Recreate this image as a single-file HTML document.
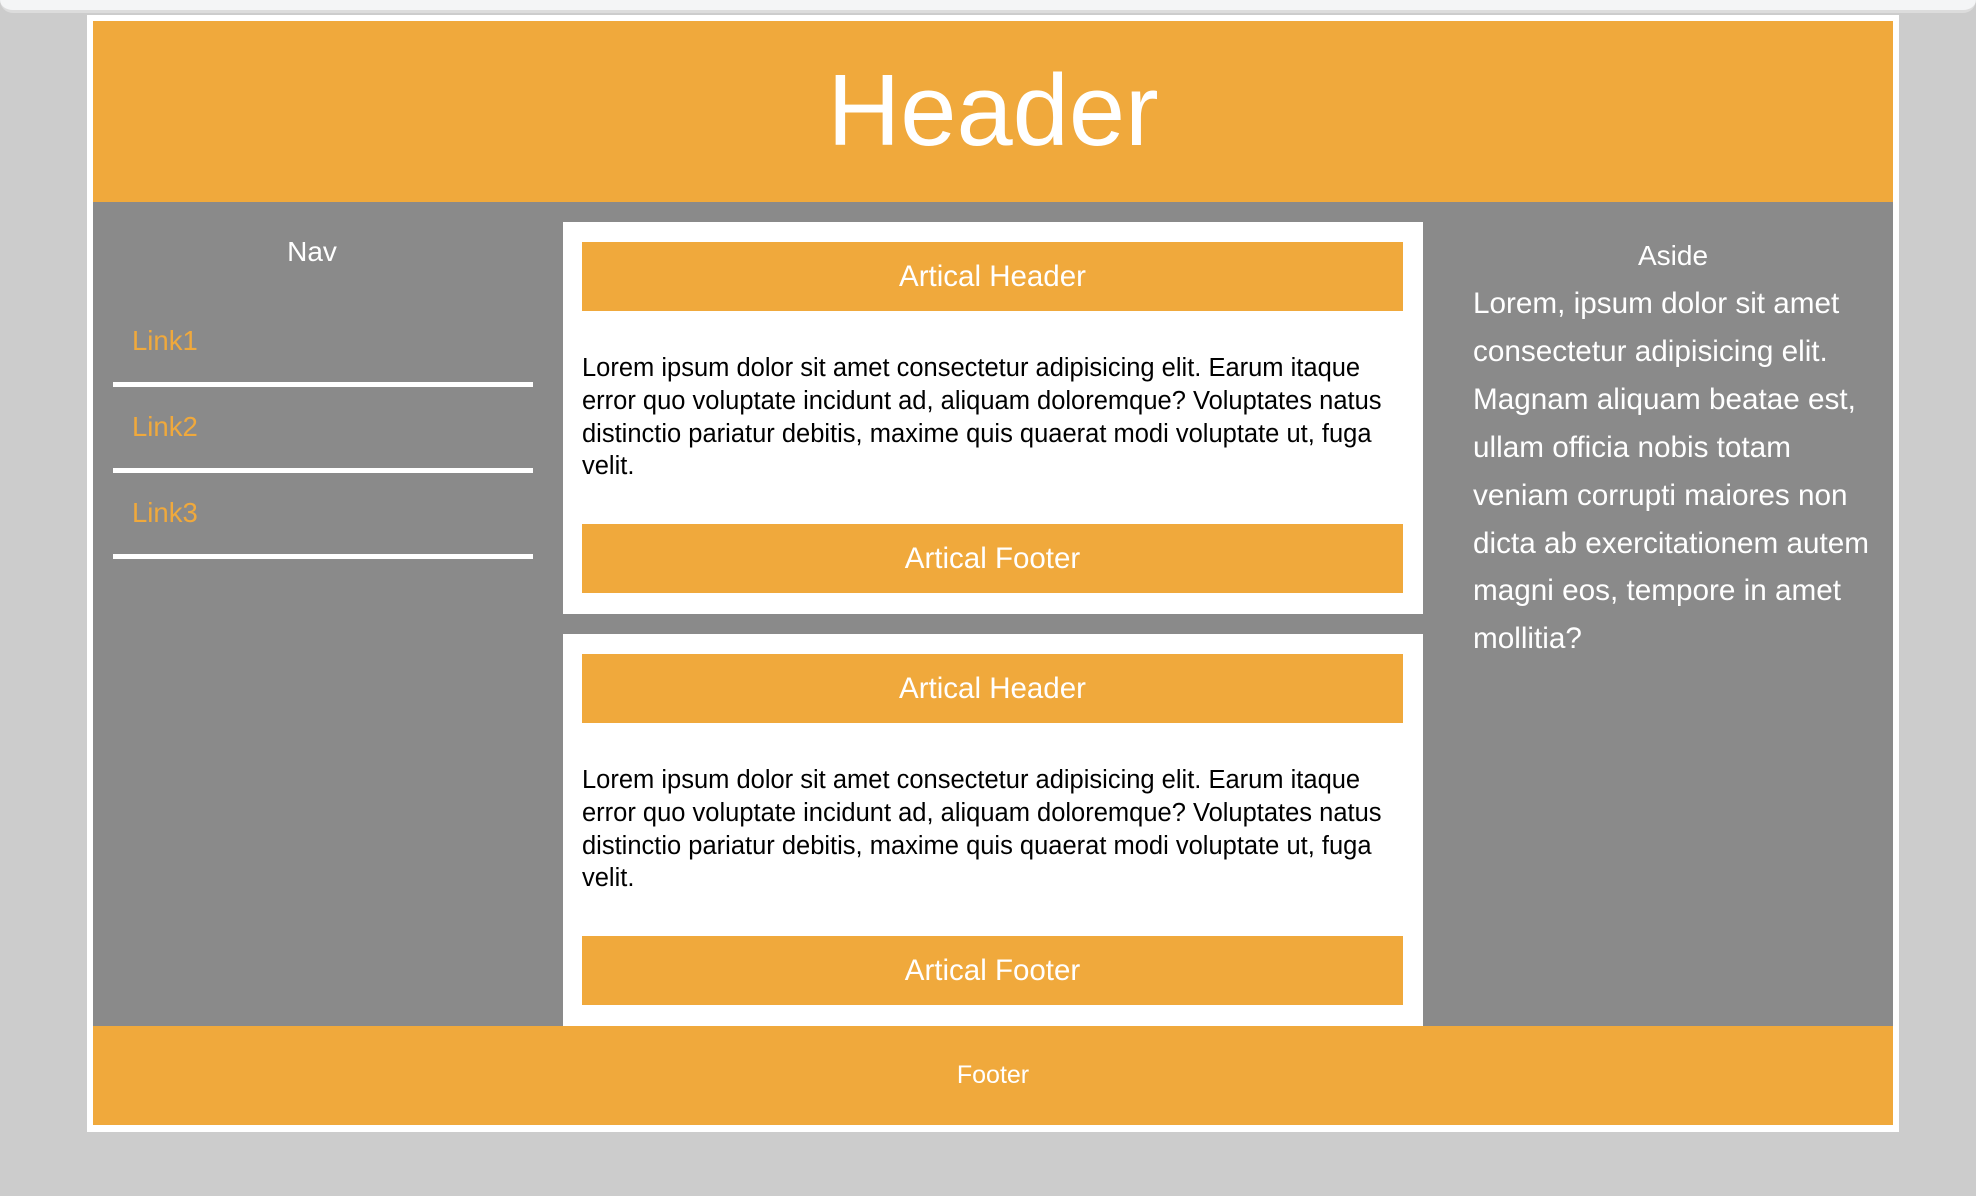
<!DOCTYPE html>
<html><head><meta charset="utf-8"><style>
*{margin:0;padding:0;box-sizing:border-box}
body{width:1976px;height:1196px;background:#cccccc;position:relative;overflow:hidden;font-family:"Liberation Sans",sans-serif}
.a{position:absolute}
.top{left:0;top:0;width:1976px;height:13px;background:#f4f5f6;border-bottom:3px solid #dcdcdc;border-radius:0 0 14px 14px}
.cont{left:87px;top:15px;width:1812px;height:1117px;background:#fff}
.hdr{left:93px;top:21px;width:1800px;height:181px;background:#f0a93c;color:#fff;font-size:101px;text-align:center;line-height:181px}
.main{left:93px;top:202px;width:1800px;height:824px;background:#8a8a8a}
.ftr{left:93px;top:1026px;width:1800px;height:99px;background:#f0a93c;color:#fff;font-size:25px;text-align:center;line-height:99px}
.navt{left:93px;width:438px;top:236px;text-align:center;color:#fff;font-size:28px;line-height:32px}
.lk{left:132px;color:#f0a93c;font-size:27.5px;line-height:32px}
.ln{left:113px;width:420px;height:5px;background:#fff}
.art{left:563px;width:860px;height:392px;background:#fff}
.ah{left:582px;width:821px;height:69px;background:#f0a93c;color:#fff;font-size:29.5px;text-align:center;line-height:69px}
.txt{left:582px;width:840px;font-size:25.5px;line-height:32.8px;color:#000;white-space:nowrap}
.asd{left:1438px;width:470px;text-align:center;color:#fff;font-size:28px;top:240px;line-height:32px}
.at{left:1473px;top:280px;color:#fff;font-size:29.7px;line-height:47.9px;white-space:nowrap}
</style></head><body>
<div class="a top"></div>
<div class="a cont"></div>
<div class="a hdr">Header</div>
<div class="a main"></div>
<div class="a navt">Nav</div>
<div class="a lk" style="top:325px">Link1</div>
<div class="a ln" style="top:382px"></div>
<div class="a lk" style="top:411px">Link2</div>
<div class="a ln" style="top:468px"></div>
<div class="a lk" style="top:497px">Link3</div>
<div class="a ln" style="top:554px"></div>

<div class="a art" style="top:222px"></div>
<div class="a ah" style="top:242px">Artical Header</div>
<div class="a txt" style="top:352px">Lorem ipsum dolor sit amet consectetur adipisicing elit. Earum itaque<br>error quo voluptate incidunt ad, aliquam doloremque? Voluptates natus<br>distinctio pariatur debitis, maxime quis quaerat modi voluptate ut, fuga<br>velit.</div>
<div class="a ah" style="top:524px">Artical Footer</div>

<div class="a art" style="top:634px"></div>
<div class="a ah" style="top:654px">Artical Header</div>
<div class="a txt" style="top:764px">Lorem ipsum dolor sit amet consectetur adipisicing elit. Earum itaque<br>error quo voluptate incidunt ad, aliquam doloremque? Voluptates natus<br>distinctio pariatur debitis, maxime quis quaerat modi voluptate ut, fuga<br>velit.</div>
<div class="a ah" style="top:936px">Artical Footer</div>

<div class="a asd">Aside</div>
<div class="a at">Lorem, ipsum dolor sit amet<br>consectetur adipisicing elit.<br>Magnam aliquam beatae est,<br>ullam officia nobis totam<br>veniam corrupti maiores non<br>dicta ab exercitationem autem<br>magni eos, tempore in amet<br>mollitia?</div>

<div class="a ftr">Footer</div>
</body></html>
